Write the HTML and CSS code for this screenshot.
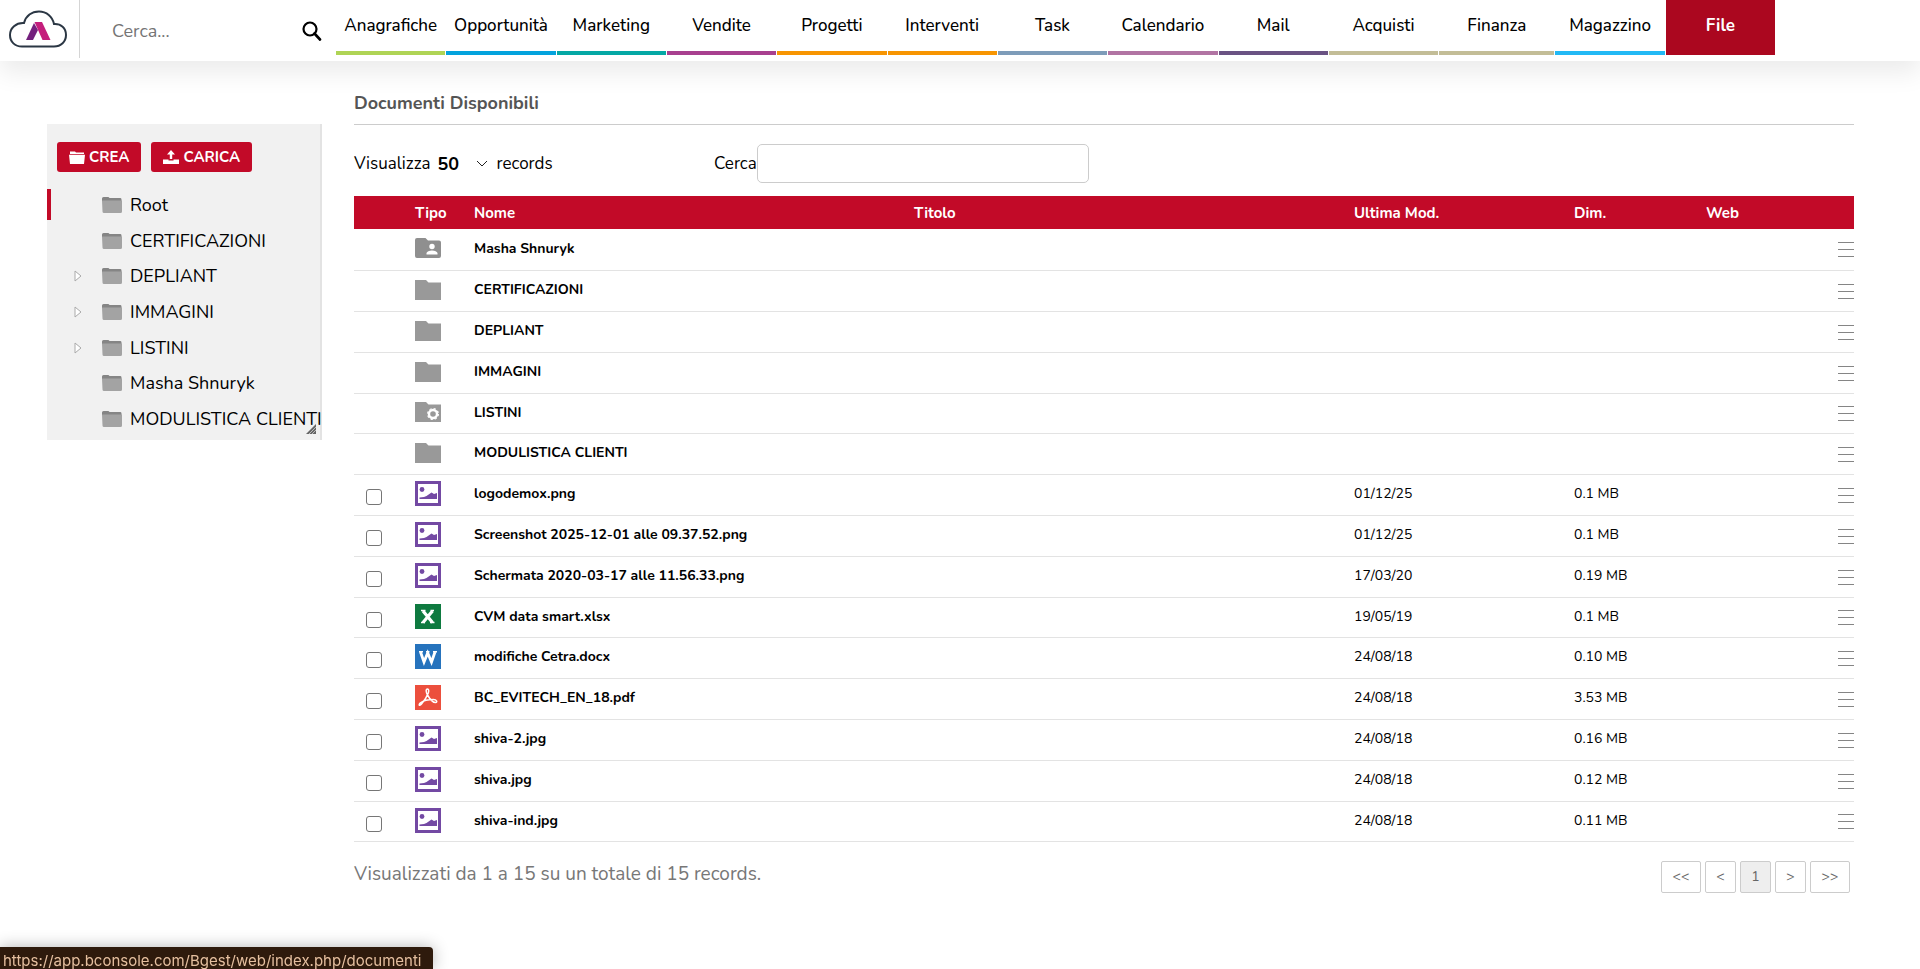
FILE: index.html
```html
<!DOCTYPE html>
<html lang="it">
<head>
    <meta charset="UTF-8">
    <meta name="viewport" content="width=device-width, initial-scale=1.0">
    <title>Documenti Disponibili</title>
    <link rel="stylesheet" href="styles.css">
</head>
<body>
    <!-- Icone condivise -->
    <svg class="sprite" aria-hidden="true">
        <symbol id="tree-folder" viewBox="0 0 20 16">
            <path d="M0 3V1.500Q0 0 1.500 0H6Q7 0 7.500 1H18.500Q19.500 1 19.500 2.500V4H0z" fill="#858585"/>
            <path d="M0 3.500H20V14.500Q20 16 18.500 16H2Q.5 16 .5 14.500z" fill="#a3a3a3"/>
        </symbol>
        <symbol id="folder" viewBox="0 0 26 20">
            <path d="M0 0H11L13.500 2.500H26V20H0z" fill="#999"/>
        </symbol>
        <symbol id="folder-user" viewBox="0 0 26 20">
            <path d="M2 0H10.500L13 2.500H24Q26 2.500 26 4.500V18Q26 20 24 20H2Q0 20 0 18V2Q0 0 2 0z" fill="#8f8f8f"/>
            <circle cx="17" cy="8.500" r="2.700" fill="#fff"/>
            <path d="M11.500 16.500V15Q12.500 12.500 17 12.500T22.500 15V16.500z" fill="#fff"/>
        </symbol>
        <symbol id="folder-gear" viewBox="0 0 26 20">
            <path d="M0 0H11L13.500 2.500H26V20H0z" fill="#999"/>
            <circle cx="18" cy="12" r="4" fill="none" stroke="#fff" stroke-width="2.400"/>
            <circle cx="18" cy="12" r="5.400" fill="none" stroke="#fff" stroke-width="1.200" stroke-dasharray="2.200 2.041"/>
        </symbol>
        <symbol id="image" viewBox="0 0 26 25">
            <path d="M1.500 1.500H24.500V23.500H1.500z" fill="#fff" stroke="#7349a3" stroke-width="3"/>
            <circle cx="7" cy="8.500" r="2.400" fill="#7349a3"/>
            <path d="M4.500 18V16.500L9 16L11.500 15L16.500 11.500L19 13L22 12V18z" fill="#7349a3"/>
        </symbol>
        <symbol id="excel" viewBox="0 0 26 25">
            <path d="M0 0H26V25H0z" fill="#0e7a40"/>
            <path d="M8 7L17.500 18.500M17.500 7L8 18.500" stroke="#fff" stroke-width="3.200"/>
            <path d="M6 6.500H10.500M15.500 6.500H19M6 18.500H10M15 18.500H19.500" stroke="#fff" stroke-width="1.500"/>
        </symbol>
        <symbol id="word" viewBox="0 0 26 25">
            <path d="M0 0H26V25H0z" fill="#2673bd"/>
            <path d="M5.500 8L9 18L12.700 9L16.500 18L20 8" fill="none" stroke="#fff" stroke-width="2.800"/>
            <path d="M4 7.800H8M11 7.800H14.500M18 7.800H22" stroke="#fff" stroke-width="1.500"/>
        </symbol>
        <symbol id="pdf" viewBox="0 0 26 25">
            <path d="M0 0H26V25H0z" fill="#ec4f3d"/>
            <path d="M12.500 4C10.500 4 11 7.500 12.500 10C14.500 13.500 18 17.500 20.500 17.500C23 17 21.500 14.500 18.500 14.500C14 14.500 8.500 15.500 5.500 17.800C3 20 4.500 21.500 6.500 19C9 16 12 11.500 13.300 8C14 5.500 13.800 4 12.500 4z" fill="none" stroke="#fff" stroke-width="1.500"/>
        </symbol>
        <symbol id="menu" viewBox="0 0 16 16">
            <path d="M0 1.500H16M0 8.500H16M0 15.500H16" stroke="#858585" stroke-width="1"/>
        </symbol>
        <symbol id="arrow" viewBox="0 0 8 12">
            <path d="M1 1L7 6L1 11z" fill="#fff" stroke="#aaa" stroke-width="1"/>
        </symbol>
    </svg>

    <header class="topbar">
        <a class="logo" href="#" aria-label="Home">
            <svg width="58" height="38" viewBox="0 0 58 38">
                <path d="M13 36.500H45C52 36.500 57 31.500 57 25C57 18 52 13.500 45 14C43.500 6.500 37.500 1.500 30 1.500C22.500 1.500 17 6 15 13C7 12.500 1 18 1 25C1 32 6 36.500 13 36.500z" fill="#fff" stroke="#2b3744" stroke-width="2"/>
                <path d="M25 13L29 20L24 30H17z" fill="#74207d"/>
                <path d="M25.500 12H33L41.500 30H33.500z" fill="#c41e7c"/>
            </svg>
        </a>
        <form class="search">
            <input type="text" placeholder="Cerca..." aria-label="Cerca">
            <button type="button" aria-label="Avvia ricerca">
                <svg width="20" height="20" viewBox="0 0 20 20">
                    <circle cx="8" cy="8" r="6.500" fill="none" stroke="#000" stroke-width="2.200"/>
                    <path d="M12.500 12.500L18 18.500" stroke="#000" stroke-width="2.600" stroke-linecap="round"/>
                </svg>
            </button>
        </form>
        <nav class="nav">
            <a class="anagrafiche" href="#">Anagrafiche</a>
            <a class="opportunita" href="#">Opportunità</a>
            <a class="marketing" href="#">Marketing</a>
            <a class="vendite" href="#">Vendite</a>
            <a class="progetti" href="#">Progetti</a>
            <a class="interventi" href="#">Interventi</a>
            <a class="task" href="#">Task</a>
            <a class="calendario" href="#">Calendario</a>
            <a class="mail" href="#">Mail</a>
            <a class="acquisti" href="#">Acquisti</a>
            <a class="finanza" href="#">Finanza</a>
            <a class="magazzino" href="#">Magazzino</a>
            <a class="file" href="#">File</a>
        </nav>
    </header>

    <div class="page">
        <aside class="sidebar">
            <div class="actions">
                <button type="button">
                    <svg width="16" height="13" viewBox="0 0 16 13"><path d="M1 2V.5H6L7 1.500H15V3H1zM0 3.800H16L15 13H1z" fill="#fff"/></svg>
                    CREA
                </button>
                <button type="button">
                    <svg width="16" height="14" viewBox="0 0 16 14"><path d="M8 0L12 4.500H9.200V9H6.800V4.500H4zM0 9.500H5.500V10.500H10.500V9.500H16V14H0z" fill="#fff"/></svg>
                    CARICA
                </button>
            </div>
            <ul class="tree">
                <li class="active"><a href="#"><svg class="tree-icon"><use href="#tree-folder"/></svg>Root</a></li>
                <li><a href="#"><svg class="tree-icon"><use href="#tree-folder"/></svg>CERTIFICAZIONI</a></li>
                <li><svg class="arrow"><use href="#arrow"/></svg><a href="#"><svg class="tree-icon"><use href="#tree-folder"/></svg>DEPLIANT</a></li>
                <li><svg class="arrow"><use href="#arrow"/></svg><a href="#"><svg class="tree-icon"><use href="#tree-folder"/></svg>IMMAGINI</a></li>
                <li><svg class="arrow"><use href="#arrow"/></svg><a href="#"><svg class="tree-icon"><use href="#tree-folder"/></svg>LISTINI</a></li>
                <li><a href="#"><svg class="tree-icon"><use href="#tree-folder"/></svg>Masha Shnuryk</a></li>
                <li><a href="#"><svg class="tree-icon"><use href="#tree-folder"/></svg>MODULISTICA CLIENTI</a></li>
            </ul>
            <svg class="grip" viewBox="0 0 10 10"><path d="M0 10L10 0V10z" fill="#666"/><path d="M3 10L10 3M6 10L10 6" stroke="#bbb" stroke-width="1"/></svg>
        </aside>

        <main class="content">
            <h1>Documenti Disponibili</h1>

            <div class="filters">
                <div class="length">
                    <label for="length">Visualizza</label>
                    <select id="length">
                        <option>50</option>
                    </select>
                    <span>records</span>
                </div>
                <div class="filter">
                    <label for="filter">Cerca</label>
                    <input id="filter" type="text">
                </div>
            </div>

            <table class="docs">
                <colgroup>
                    <col class="col-check">
                    <col class="col-type">
                    <col>
                    <col>
                    <col class="col-date">
                    <col class="col-size">
                    <col class="col-web">
                    <col class="col-menu">
                </colgroup>
                <thead>
                    <tr><th></th><th>Tipo</th><th>Nome</th><th>Titolo</th><th>Ultima Mod.</th><th>Dim.</th><th>Web</th><th></th></tr>
                </thead>
                <tbody id="rows"></tbody>
            </table>

            <div class="table-footer">
                <p>Visualizzati da 1 a 15 su un totale di 15 records.</p>
                <div class="pagination">
                    <button type="button" class="wide">&lt;&lt;</button>
                    <button type="button">&lt;</button>
                    <button type="button" class="current">1</button>
                    <button type="button">&gt;</button>
                    <button type="button" class="wide">&gt;&gt;</button>
                </div>
            </div>
        </main>
    </div>

    <div class="status">https://app.bconsole.com/Bgest/web/index.php/documenti</div>

    <script>
        const docs = [
            ["folder-user", "Masha Shnuryk"],
            ["folder", "CERTIFICAZIONI"],
            ["folder", "DEPLIANT"],
            ["folder", "IMMAGINI"],
            ["folder-gear", "LISTINI"],
            ["folder", "MODULISTICA CLIENTI"],
            ["image", "logodemox.png", "01/12/25", "0.1 MB"],
            ["image", "Screenshot 2025-12-01 alle 09.37.52.png", "01/12/25", "0.1 MB"],
            ["image", "Schermata 2020-03-17 alle 11.56.33.png", "17/03/20", "0.19 MB"],
            ["excel", "CVM data smart.xlsx", "19/05/19", "0.1 MB"],
            ["word", "modifiche Cetra.docx", "24/08/18", "0.10 MB"],
            ["pdf", "BC_EVITECH_EN_18.pdf", "24/08/18", "3.53 MB"],
            ["image", "shiva-2.jpg", "24/08/18", "0.16 MB"],
            ["image", "shiva.jpg", "24/08/18", "0.12 MB"],
            ["image", "shiva-ind.jpg", "24/08/18", "0.11 MB"]
        ];

        document.getElementById("rows").innerHTML = docs.map(([icon, name, date, size]) => {
            const check = date ? `<input type="checkbox" aria-label="Seleziona ${name}">` : "";
            const kind = date ? "file-icon" : "folder-icon";
            return `<tr>
                <td class="check">${check}</td>
                <td><svg class="${kind}"><use href="#${icon}"/></svg></td>
                <td class="name">${name}</td>
                <td></td>
                <td>${date || ""}</td>
                <td>${size || ""}</td>
                <td></td>
                <td class="menu"><button type="button" aria-label="Menu ${name}"><svg><use href="#menu"/></svg></button></td>
            </tr>`;
        }).join("");
    </script>
</body>
</html>
```
FILE: styles.css
```css
* {
    box-sizing: border-box;
}
body {
    margin: 0;
    font-family: Nunito, Lato, sans-serif;
    font-size: 17px;
    color: #000;
    background: #fff;
}
a {
    color: inherit;
    text-decoration: none;
}
button,
input,
select {
    font-family: inherit;
}
svg {
    display: block;
    flex-shrink: 0;
}
.sprite {
    position: absolute;
    width: 0;
    height: 0;
}

/* Barra superiore */
.topbar {
    display: flex;
    align-items: flex-start;
    height: 61px;
    padding-right: 145px;
    background: #fff;
    box-shadow: 0 12px 24px rgba(0, 0, 0, 0.08);
}
.logo {
    width: 80px;
    height: 58px;
    padding: 10px 8px 0 9px;
    border-right: 1px solid #d5d5d5;
}
.search {
    display: flex;
    align-items: center;
    width: 256px;
    height: 61px;
    padding: 0 14px 0 32px;
}
.search input {
    flex: 1;
    min-width: 0;
    padding: 0;
    border: none;
    outline: none;
    font-size: 18px;
}
.search input::placeholder {
    color: #757575;
}
.search button {
    padding: 0;
    border: none;
    background: none;
}
.nav {
    display: flex;
    flex: 1;
    gap: 1px;
}
.nav a {
    flex: 1 1 109px;
    height: 55px;
    line-height: 52px;
    text-align: center;
    border-bottom: 4px solid;
    font-size: 17px;
    font-weight: 500;
}
.nav .anagrafiche { border-color: #afd455; }
.nav .opportunita { border-color: #03a3dd; }
.nav .marketing { border-color: #04a8a5; }
.nav .vendite { border-color: #a8408f; }
.nav .progetti { border-color: #f79502; }
.nav .interventi { border-color: #f79502; }
.nav .task { border-color: #7e9cb9; }
.nav .calendario { border-color: #b174a3; }
.nav .mail { border-color: #6a5383; }
.nav .acquisti { border-color: #c3bd97; }
.nav .finanza {
    flex-basis: 115px;
    border-color: #c3bd97;
}
.nav .magazzino { border-color: #22b9f5; }
.nav .file {
    border-color: #ab071f;
    background: #ab071f;
    color: #fff;
    font-weight: bold;
}

.page {
    display: flex;
    align-items: flex-start;
    gap: 32px;
    padding: 32px 66px 0 47px;
}

/* Albero cartelle */
.sidebar {
    position: relative;
    width: 275px;
    margin-top: 31px;
    padding: 18px 0 3px;
    background: #f1f1f1;
    border-right: 2px solid #e3e3e3;
}
.actions {
    display: flex;
    gap: 10px;
    padding-left: 10px;
}
.actions button {
    display: flex;
    align-items: center;
    gap: 4px;
    height: 30px;
    padding: 0 12px;
    border: none;
    border-radius: 3px;
    background: #c20a28;
    color: #fff;
    font-size: 15px;
    font-weight: bold;
}
.tree {
    display: grid;
    grid-auto-rows: 1fr;
    height: 250px;
    margin: 15px 0 0;
    padding: 0;
    list-style: none;
}
.tree li {
    display: flex;
    align-items: center;
    padding-left: 27px;
    white-space: nowrap;
}
.tree li.active {
    background: linear-gradient(#c20a28, #c20a28) left center / 4px 31px no-repeat;
}
.tree a {
    display: flex;
    align-items: center;
    gap: 8px;
    margin-left: auto;
    width: 218px;
    font-size: 18px;
}
.tree-icon {
    width: 20px;
    height: 16px;
}
.arrow {
    width: 8px;
    height: 12px;
}
.grip {
    position: absolute;
    right: 4px;
    bottom: 6px;
    width: 10px;
    height: 10px;
}

/* Contenuto */
.content {
    flex: 1;
    min-width: 0;
}
h1 {
    margin: 0 0 19px;
    padding-bottom: 10px;
    border-bottom: 1px solid #ccc;
    color: #555;
    font-size: 18px;
    line-height: 21px;
}
.filters {
    display: flex;
    align-items: center;
    margin-bottom: 13px;
}
.length {
    display: flex;
    align-items: center;
    width: 360px;
}
#length {
    appearance: none;
    width: 66px;
    padding: 0 0 0 7px;
    border: none;
    background: url("data:image/svg+xml,%3Csvg xmlns='http://www.w3.org/2000/svg' width='12' height='8'%3E%3Cpath d='M1 1l5 5 5-5' fill='none' stroke='%23222' stroke-width='1'/%3E%3C/svg%3E") right 8px center no-repeat;
    font-size: 18px;
    font-weight: bold;
    color: #000;
}
.filter {
    display: flex;
    align-items: center;
}
.filter input {
    width: 332px;
    height: 39px;
    border: 1px solid #ccc;
    border-radius: 5px;
}
.docs {
    width: 100%;
    table-layout: fixed;
    border-collapse: collapse;
    font-size: 14px;
}
.col-check { width: 61px; }
.col-type { width: 59px; }
.col-date { width: 220px; }
.col-size { width: 132px; }
.col-web { width: 88px; }
.col-menu { width: 60px; }
.docs th {
    height: 33px;
    padding: 0;
    background: #c20a28;
    color: #fff;
    font-size: 15px;
    text-align: left;
}
.docs td {
    height: 41px;
    padding: 0 0 2px;
    border-bottom: 1px solid #e3e3e3;
}
.docs tr:nth-child(5n) td {
    height: 40px;
}
.docs .name {
    font-weight: bold;
}
.docs .check {
    padding: 5px 0 0 12px;
}
.docs .menu {
    padding: 0;
}
.check input {
    display: block;
    appearance: none;
    width: 16px;
    height: 16px;
    margin: 0;
    border: 1px solid #767676;
    border-radius: 3px;
    background: #fff;
}
.folder-icon {
    width: 26px;
    height: 20px;
}
.file-icon {
    width: 26px;
    height: 25px;
}
.menu button {
    display: block;
    margin-left: auto;
    padding: 0;
    border: none;
    background: none;
}
.menu svg {
    width: 16px;
    height: 16px;
}

/* Piede tabella */
.table-footer {
    display: flex;
    align-items: flex-start;
    justify-content: space-between;
    margin-top: 19px;
    padding-right: 4px;
}
.table-footer p {
    margin: 0;
    color: #777;
    font-size: 19px;
    line-height: 26px;
}
.pagination {
    display: flex;
    gap: 4px;
}
.pagination button {
    width: 31px;
    height: 32px;
    padding: 0;
    border: 1px solid #ccc;
    border-radius: 2px;
    background: #fff;
    color: #666;
    font-size: 14px;
}
.pagination .wide {
    width: 40px;
}
.pagination .current {
    background: #eee;
}

/* Indirizzo del link in basso a sinistra */
.status {
    position: fixed;
    left: 0;
    bottom: 0;
    height: 22px;
    padding: 0 12px 0 3px;
    border-radius: 0 4px 0 0;
    background: #2e1a0c;
    box-shadow: 0 0 16px rgba(0, 0, 0, 0.3);
    color: #e5bf9f;
    font-family: Inter, sans-serif;
    font-size: 15px;
    line-height: 27px;
}
```
